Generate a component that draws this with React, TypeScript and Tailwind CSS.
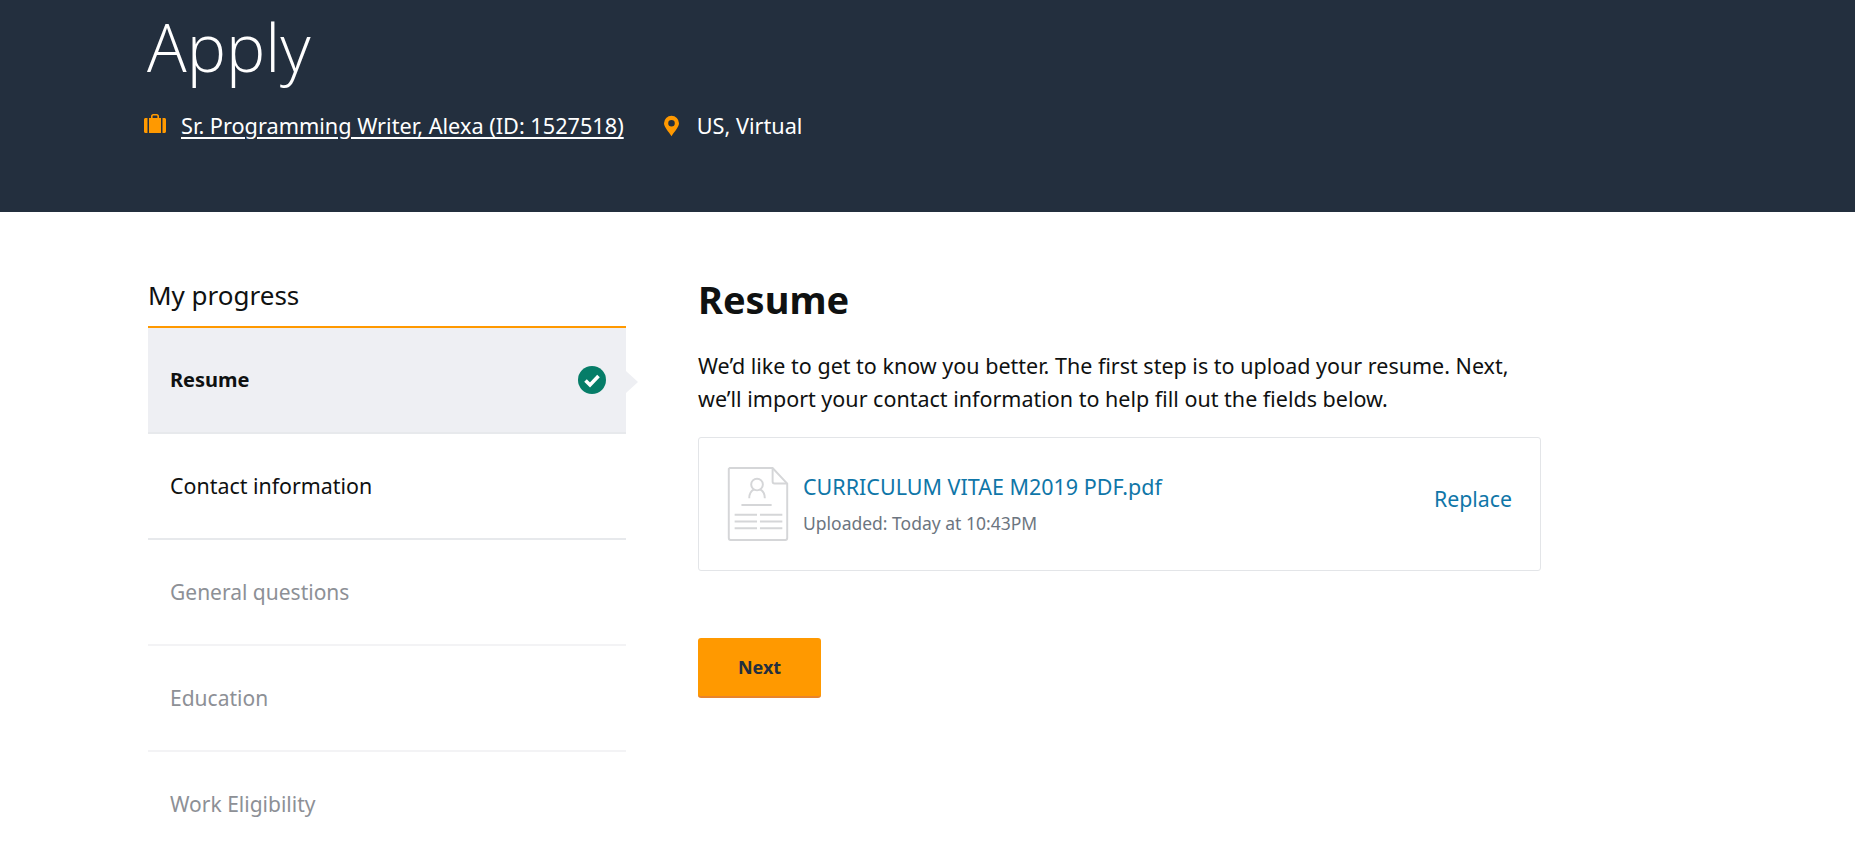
import React from "react";

function Step({ label, state }: { label: string; state: "active" | "open" | "muted" }) {
  if (state === "active") {
    return (
      <div className="relative flex h-[106px] items-center justify-between border-b-2 border-[#e7e9ec] bg-[#eeeff3] pl-[22px] pr-[20px]">
        <span className="text-[20px] font-bold text-[#0f1111]">{label}</span>
        <svg width="28" height="28" viewBox="0 0 28 28">
          <circle cx="14" cy="14" r="14" fill="#067d68" />
          <path d="M7.500 14.500l4.500 4.500 8.500-9" fill="none" stroke="#fff" strokeWidth="3.600" />
        </svg>
        <div className="absolute right-[-12px] top-[43px] h-0 w-0 border-y-[11px] border-l-[12px] border-y-transparent border-l-[#eeeff3]" />
      </div>
    );
  }
  return (
    <div
      className={
        state === "open"
          ? "flex h-[106px] items-center border-b-2 border-[#e7e9ec] pl-[22px] text-[21.400px] text-[#0f1111]"
          : "flex h-[106px] items-center border-b-2 border-[#f3f3f5] pl-[22px] pt-[2px] text-[21px] text-[#8d9096]"
      }
    >
      {label}
    </div>
  );
}

export default function App() {
  return (
    <div className="h-[849px] overflow-hidden bg-white font-['Noto_Sans',sans-serif] text-[#0f1111]">
      <header className="h-[212px] bg-[#232f3e] pl-[144px] text-white">
        <h1 className="ml-[3px] pt-[2px] font-['Open_Sans',sans-serif] text-[66px] font-light leading-[88px] tracking-[0px]">Apply</h1>
        <div className="mt-[22px] flex items-center text-[21.700px] leading-[28px]">
          <svg width="22" height="20" viewBox="0 0 22 20" className="mr-[15px] mt-[-4px]" fill="#ff9900">
            <path d="M7 4V2.200C7 1 8 0 9.200 0h3.600C14 0 15 1 15 2.200V4h-1.600V2.200c0-.4-.3-.7-.7-.7H9.300c-.4 0-.7.3-.7.700V4z" />
            <path d="M5 4h12v15H5zM1.500 4H3.500v15H1.500C.7 19 0 18.300 0 17.500v-12C0 4.700.7 4 1.500 4zM18.500 4h2c.8 0 1.500.7 1.500 1.500v12c0 .8-.7 1.500-1.500 1.500h-2z" />
          </svg>
          <a className="underline underline-offset-[3px]">Sr. Programming Writer, Alexa (ID: 1527518)</a>
          <svg width="15" height="22" viewBox="0 0 16 22" className="ml-[40px] mr-[18px]">
            <path fillRule="evenodd" fill="#ff9900" d="M8 0a8 8 0 0 1 8 8c0 4-5 9-8 14C5 17 0 12 0 8a8 8 0 0 1 8-8zm0 4.500a3.500 3.500 0 1 0 0 7 3.500 3.500 0 0 0 0-7z" />
          </svg>
          <span>US, Virtual</span>
        </div>
      </header>

      <main className="flex pl-[148px] pt-[62px]">
        <aside className="w-[478px] shrink-0 pt-[3px]">
          <div className="border-b-2 border-[#ff9900] pb-[13px] text-[26px] leading-[36px]">My progress</div>
          <Step label="Resume" state="active" />
          <Step label="Contact information" state="open" />
          <Step label="General questions" state="muted" />
          <Step label="Education" state="muted" />
          <Step label="Work Eligibility" state="muted" />
        </aside>

        <section className="ml-[72px] w-[843px]">
          <h2 className="text-[38px] font-bold leading-[50px]">Resume</h2>
          <p className="mt-[25px] text-[21.500px] leading-[33px]">
            We’d like to get to know you better. The first step is to upload your resume. Next,
            <br />
            we’ll import your contact information to help fill out the fields below.
          </p>
          <div className="mt-[22px] flex h-[134px] items-center rounded-[3px] border border-[#e3e5e8] pl-[28px] pr-[28px]">
            <svg width="62" height="74" viewBox="0 0 62 76" fill="none" stroke="#d5d6d8" strokeWidth="2">
              <path d="M2 1h44l15 16v56a2 2 0 0 1-2 2H3a2 2 0 0 1-2-2V2z" />
              <path d="M46 1v14a2 2 0 0 0 2 2h13" />
              <circle cx="30" cy="18" r="6" />
              <path d="M22 32c0-6 3-8 5-9M38 32c0-6-3-8-5-9" />
              <path d="M14 39h31M7 49h23M33 49h23M7 56h23M33 56h23M7 63h23M33 63h23" />
            </svg>
            <div className="ml-[14px] flex-1">
              <div className="text-[21.500px] leading-[28px] text-[#0f76a8]">CURRICULUM VITAE M2019 PDF.pdf</div>
              <div className="mt-[10px] text-[17.500px] leading-[24px] text-[#6c7580]">Uploaded: Today at 10:43PM</div>
            </div>
            <span className="mb-[11px] text-[21.300px] text-[#0f76a8]">Replace</span>
          </div>
          <button className="mt-[67px] h-[60px] w-[123px] rounded-[3px] border-b-2 border-[#e8842c] bg-[#ff9900] text-[18px] font-bold text-[#232f3e]">
            Next
          </button>
        </section>
      </main>
    </div>
  );
}
